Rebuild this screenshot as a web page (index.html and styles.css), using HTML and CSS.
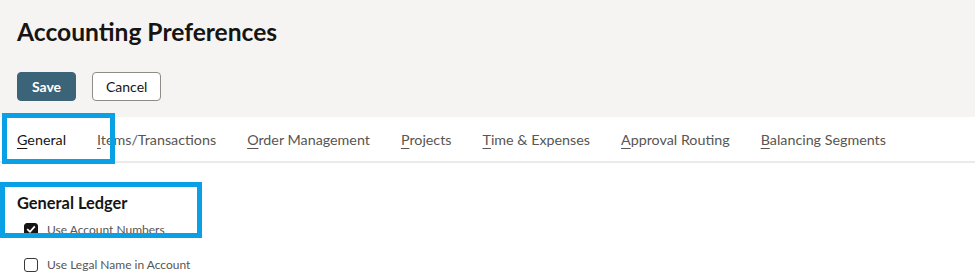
FILE: index.html
```html
<!DOCTYPE html>
<html lang="en">
<head>
    <meta charset="UTF-8">
    <meta name="viewport" content="width=device-width, initial-scale=1.0">
    <title>Accounting Preferences</title>
    <link rel="stylesheet" href="styles.css">
</head>
<body>
    <!-- Page header -->
    <header class="page-header">
        <h1>Accounting Preferences</h1>
        <div class="actions">
            <button class="btn btn-primary">Save</button>
            <button class="btn">Cancel</button>
        </div>
    </header>

    <!-- Sub tabs -->
    <nav class="tabs">
        <a class="tab active"><u>G</u>eneral</a>
        <a class="tab"><u>I</u>tems/Transactions</a>
        <a class="tab"><u>O</u>rder Management</a>
        <a class="tab"><u>P</u>rojects</a>
        <a class="tab"><u>T</u>ime &amp; Expenses</a>
        <a class="tab"><u>A</u>pproval Routing</a>
        <a class="tab"><u>B</u>alancing Segments</a>
    </nav>

    <section class="panel">
        <h2>General Ledger</h2>
        <label class="check">
            <span class="box checked">
                <svg viewBox="0 0 14 14" width="14" height="14"><path d="M3.2 7.2 L6 9.8 L10.8 4.4" fill="none" stroke="#fff" stroke-width="1.8"/></svg>
            </span>
            Use Account Numbers
        </label>
        <label class="check">
            <span class="box"></span>
            Use Legal Name in Account
        </label>
    </section>

    <!-- annotation boxes drawn over the screenshot -->
    <div class="highlight hl-tab"></div>
    <div class="highlight hl-section"></div>
</body>
</html>
```

FILE: styles.css
```css
* {
    margin: 0;
    padding: 0;
    box-sizing: border-box;
}

body {
    font-family: 'Lato', 'Noto Sans', sans-serif;
    color: #161513;
    background: #ffffff;
    width: 975px;
    height: 277px;
    overflow: hidden;
    position: relative;
}

.page-header {
    background: #f5f4f2;
    padding: 16px 17px 16px;
}

h1 {
    font-size: 24.6px;
    line-height: 32px;
    font-weight: 700;
    margin-bottom: 24px;
}

.actions {
    display: flex;
    gap: 16px;
}

.btn {
    height: 29px;
    padding: 0 13px;
    border: 1px solid #8f8b86;
    border-radius: 4px;
    background: #ffffff;
    color: #161513;
    font-family: inherit;
    font-size: 14px;
}

.btn-primary {
    width: 59px;
    background: #3c6479;
    border-color: #3c6479;
    color: #ffffff;
    font-weight: 700;
}

.tabs {
    display: flex;
    gap: 31px;
    height: 46px;
    align-items: center;
    padding: 0 17px;
    border-bottom: 2px solid #ebeae8;
}

.tab {
    font-size: 14.3px;
    color: #585552;
    text-decoration: none;
}

.tab u {
    text-underline-offset: 3px;
}

.tab.active {
    color: #161513;
}

.panel {
    padding: 27px 17px 0;
}

h2 {
    font-size: 16.4px;
    line-height: 26px;
    font-weight: 700;
}

.check {
    display: flex;
    align-items: center;
    gap: 9px;
    height: 35px;
    margin-left: 7px;
    margin-top: -4px;
    font-size: 12px;
    color: #585552;
}

.check + .check {
    margin-top: 0;
}

.box {
    width: 14px;
    height: 14px;
    border: 1.5px solid #3a3835;
    border-radius: 3px;
    display: flex;
}

.box.checked {
    background: #161513;
    border-color: #161513;
}

.box svg {
    margin: -1.5px;
}

.highlight {
    position: absolute;
    border: 5px solid #0aa0e6;
}

.hl-tab {
    left: 2px;
    top: 113px;
    width: 113px;
    height: 51px;
}

.hl-section {
    left: 0;
    top: 182px;
    width: 202px;
    height: 56px;
}
```
